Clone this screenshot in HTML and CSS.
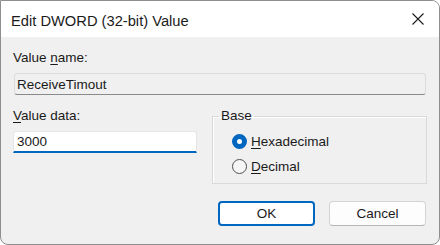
FILE: index.html
```html
<!DOCTYPE html>
<html lang="en">
  <head>
    <meta charset="UTF-8" />
    <meta name="viewport" content="width=device-width, initial-scale=1.0" />
    <title>Edit DWORD (32-bit) Value</title>
    <link rel="stylesheet" href="styles.css">
  </head>
  <body>
    <div class="window">
      <div class="titlebar">
        <span class="title">Edit DWORD (32-bit) Value</span>
        <div class="close">
          <svg width="12" height="12" viewBox="0 0 12 12">
            <path d="M0.5 0.5 L11.5 11.5 M11.5 0.5 L0.5 11.5" stroke="#1b1b1b" stroke-width="1.1" fill="none" />
          </svg>
        </div>
      </div>

      <div class="content">
        <label class="label" for="value-name">Value <u>n</u>ame:</label>
        <input class="field readonly" id="value-name" type="text" value="ReceiveTimout" readonly />

        <div class="row">
          <div class="data-col">
            <label class="label" for="value-data"><u>V</u>alue data:</label>
            <input class="field data" id="value-data" type="text" value="3000" />
          </div>

          <fieldset class="base">
            <legend>Base</legend>
            <div class="radios">
              <div class="radio">
                <span class="mark checked"></span>
                <span><u>H</u>exadecimal</span>
              </div>
              <div class="radio">
                <span class="mark"></span>
                <span><u>D</u>ecimal</span>
              </div>
            </div>
          </fieldset>
        </div>

        <div class="buttons">
          <button class="btn default">OK</button>
          <button class="btn">Cancel</button>
        </div>
      </div>
    </div>
  </body>
</html>
```

FILE: styles.css
```css
* {
  box-sizing: border-box;
}
body {
  margin: 0;
  background: #ffffff;
  font-family: "Liberation Sans", Arial, sans-serif;
  font-size: 13.5px;
  color: #1a1a1a;
}
u {
  text-decoration-thickness: 1px;
  text-underline-offset: 2px;
}
.window {
  width: 440px;
  height: 245px;
  border: 1px solid #8e8e8e;
  border-radius: 0 8px 8px 8px;
  background: #f0f0f0;
  overflow: hidden;
}
.titlebar {
  height: 36px;
  background: #ffffff;
  display: flex;
  align-items: center;
  padding-top: 3px;
}
.title {
  padding-left: 10px;
  font-size: 14.7px;
  line-height: 20px;
  color: #1b1b1b;
  flex: 1;
}
.close {
  width: 42px;
  height: 36px;
  margin-top: -3px;
  display: flex;
  align-items: center;
  justify-content: center;
}
.close svg {
  display: block;
}
.content {
  padding: 13px 12px 0 12px;
}
.label {
  display: block;
  line-height: 16px;
}
.field {
  display: block;
  font-family: inherit;
  font-size: 13.5px;
  color: #1a1a1a;
  outline: none;
  margin: 0;
}
.readonly {
  width: 412px;
  height: 22px;
  margin: 7px 1px 0 1px;
  padding: 0 0 0 2px;
  line-height: 17px;
  background: #f0f0f0;
  border: 1px solid #dcdcdc;
  border-bottom-color: #8a8a8a;
  border-radius: 3px;
}
.row {
  display: flex;
  margin-top: 13px;
}
.data-col {
  width: 184px;
  margin-right: 15px;
}
.data {
  width: 184px;
  height: 22px;
  margin-top: 7px;
  padding: 0 0 0 3px;
  background: #ffffff;
  border: 1px solid #e6e6e6;
  border-bottom: 2px solid #0067c0;
  border-radius: 3px 3px 0 0;
}
.base {
  flex: 1;
  margin: 0;
  padding: 0 0 4px 6px;
  border: 1px solid #d9d9d9;
  box-shadow: inset 1px 1px 0 #ffffff;
}
.base legend {
  padding: 0 2px;
  line-height: 16px;
}
.radios {
  padding-top: 5px;
  margin-left: 13px;
}
.radio {
  display: flex;
  align-items: center;
  height: 25px;
  line-height: 16px;
}
.mark {
  width: 15px;
  height: 15px;
  border-radius: 50%;
  border: 1px solid #4f4f4f;
  background: #f6f6f6;
  margin-right: 4px;
}
.mark.checked {
  border: 5px solid #0067c0;
  background: #ffffff;
}
.buttons {
  display: flex;
  justify-content: flex-end;
  gap: 14px;
  margin-top: 17px;
  margin-right: 1px;
}
.btn {
  width: 97px;
  height: 25px;
  padding: 0;
  font-family: inherit;
  font-size: 13.5px;
  color: #1a1a1a;
  background: #fdfdfd;
  border: 1px solid #d3d3d3;
  border-bottom-color: #b5b5b5;
  border-radius: 4px;
}
.btn.default {
  background: #ffffff;
  border: 2px solid #0067c0;
}
```
